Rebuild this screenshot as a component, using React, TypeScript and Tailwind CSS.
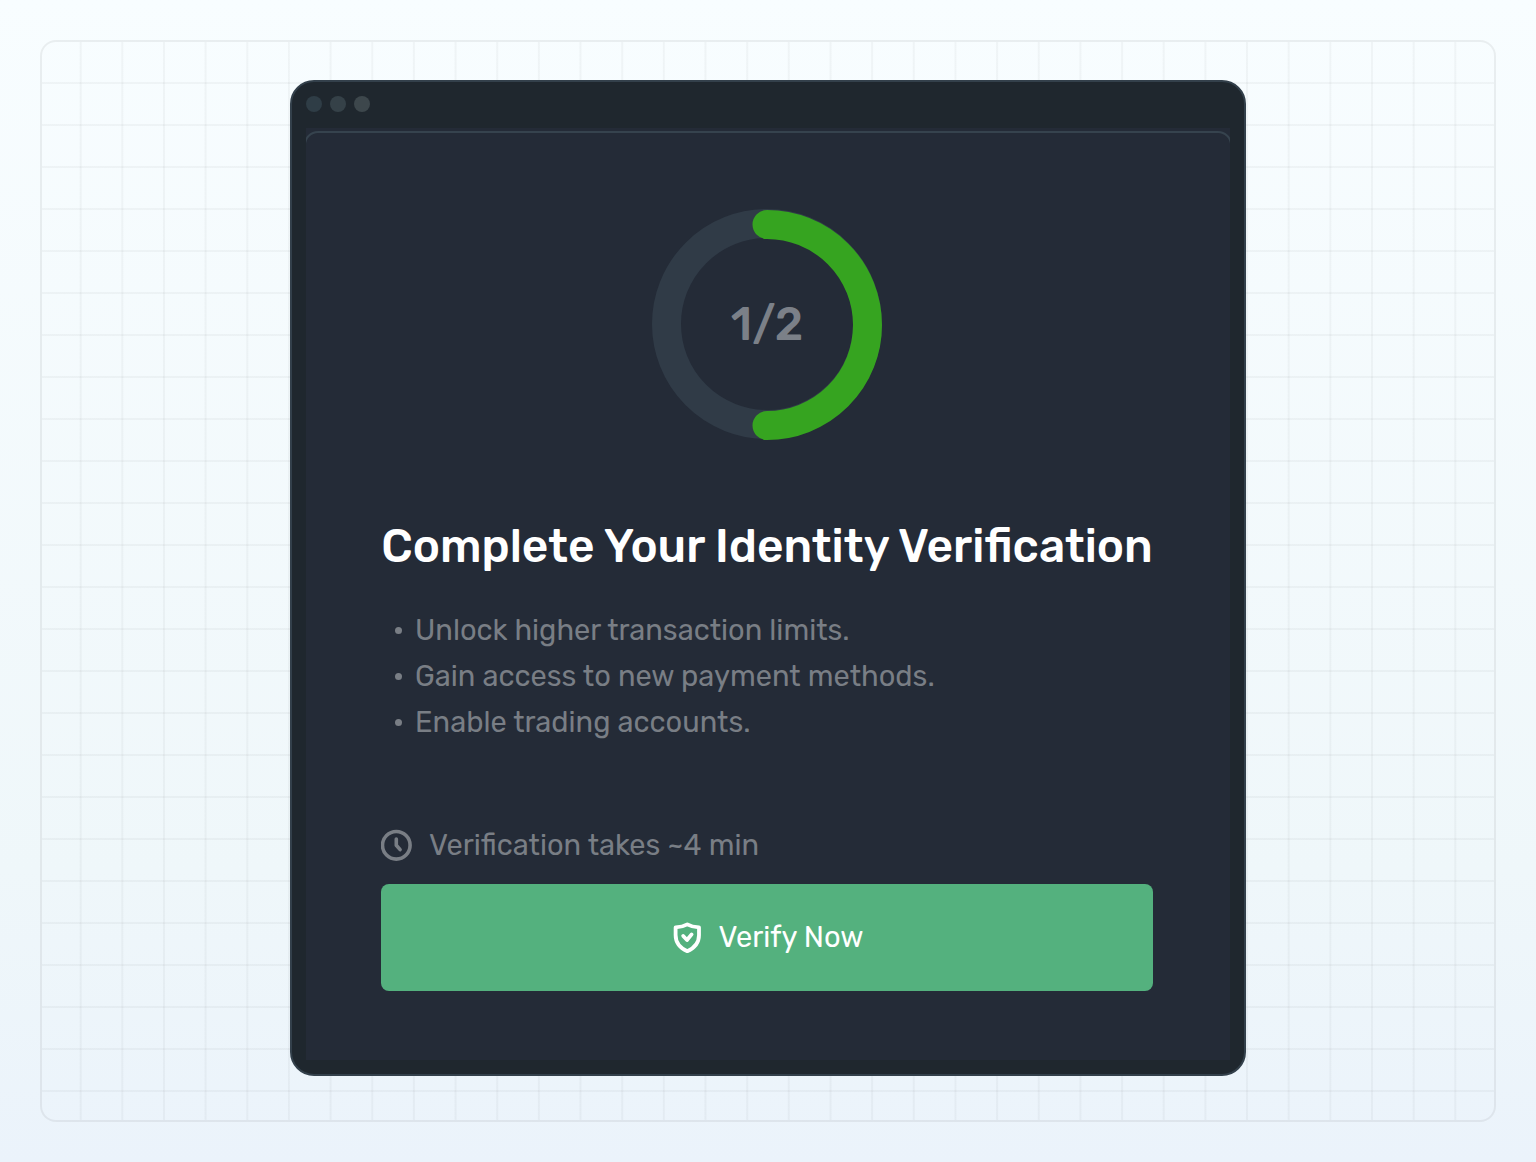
const benefits = [
  "Unlock higher transaction limits.",
  "Gain access to new payment methods.",
  "Enable trading accounts.",
];

function ProgressRing() {
  return (
    <div className="relative mx-auto size-[232px]">
      <svg viewBox="0 0 232 232" className="size-full" fill="none" aria-hidden="true">
        <circle cx="116" cy="116" r="100.5" stroke="#303b47" strokeWidth="29" />
        <path
          d="M116 16.500A100.200 100.200 0 0 1 116 217.500"
          stroke="#36a420"
          strokeWidth="29"
          strokeLinecap="round"
        />
      </svg>
      <p className="absolute inset-0 flex items-center justify-center pt-[2px] text-[46px] leading-none font-medium text-[#7b8088]">
        1/2
      </p>
    </div>
  );
}

function ClockIcon() {
  return (
    <svg viewBox="0 0 32 32" className="size-8 shrink-0" fill="none" stroke="currentColor" aria-hidden="true">
      <circle cx="15.3" cy="16.3" r="13.8" strokeWidth="3.6" />
      <path d="M15.300 10v6.200l3.800 4.400" strokeWidth="3.6" strokeLinecap="round" strokeLinejoin="round" />
    </svg>
  );
}

function ShieldIcon() {
  return (
    <svg viewBox="0 0 32 32" className="size-8 shrink-0" fill="none" stroke="currentColor" strokeWidth="3.8" strokeLinejoin="round" aria-hidden="true">
      <path d="M16.300 2.400C13 4.200 8.500 5.200 4.600 5.400V13C4.600 20.500 9.500 26.200 16.300 29.200C23 26.200 28 20.500 28 13V5.400C24 5.200 19.500 4.200 16.300 2.400Z" />
      <path d="M12.200 14l3.800 4 4.600-5.600" strokeLinecap="round" />
    </svg>
  );
}

export default function App() {
  return (
    <div className="min-h-screen bg-linear-to-b from-[#f8fdff] via-[#eff7fa] via-75% to-[#ebf3fb] p-10 font-['Rubik','Roboto',sans-serif]">
      <div className="rounded-2xl border-2 border-[#25252512] bg-[linear-gradient(to_left,#2525250a_2px,transparent_2px),linear-gradient(to_top,#2525250a_2px,transparent_2px)] bg-size-[calc((100%+6px)/35)_42px] bg-position-[-2px_0px] bg-clip-padding pt-[38px] pb-11">
        <main className="mx-auto w-full max-w-[956px] rounded-3xl border-2 border-[#33404b] bg-[#1f272e] p-[14px]">
          <div className="flex gap-2 pb-4">
            <span className="size-4 rounded-full bg-[#2f3d46]" />
            <span className="size-4 rounded-full bg-[#354148]" />
            <span className="size-4 rounded-full bg-[#3d474c]" />
          </div>
          <div className="overflow-hidden bg-[#242b37] pt-[3px]">
            <section className="-mx-[2px] -mb-[2px] rounded-t-[14px] border-2 border-[#36434e] pt-[75px] pr-[77px] pb-[69px] pl-[75px]">
              <ProgressRing />
              <h1 className="mt-[77px] text-center text-[46px] leading-[60px] font-medium text-white">
                Complete Your Identity Verification
              </h1>
              <ul className="mt-[30px] text-[29px] leading-[46px] text-[#797e85]">
                {benefits.map((b) => (
                  <li key={b} className="flex items-center gap-[13px] pl-[14px]">
                    <span className="size-[7px] rounded-full bg-current" />
                    {b}
                  </li>
                ))}
              </ul>
              <p className="mt-[77px] flex items-center gap-4 text-[29px] leading-[46px] text-[#797e85]">
                <ClockIcon />
                Verification takes ~4 min
              </p>
              <button
                type="button"
                className="mt-4 flex h-[107px] w-full items-center justify-center gap-4 rounded-lg bg-[#54b17e] text-[29px] text-white"
              >
                <ShieldIcon />
                Verify Now
              </button>
            </section>
          </div>
        </main>
      </div>
    </div>
  );
}
